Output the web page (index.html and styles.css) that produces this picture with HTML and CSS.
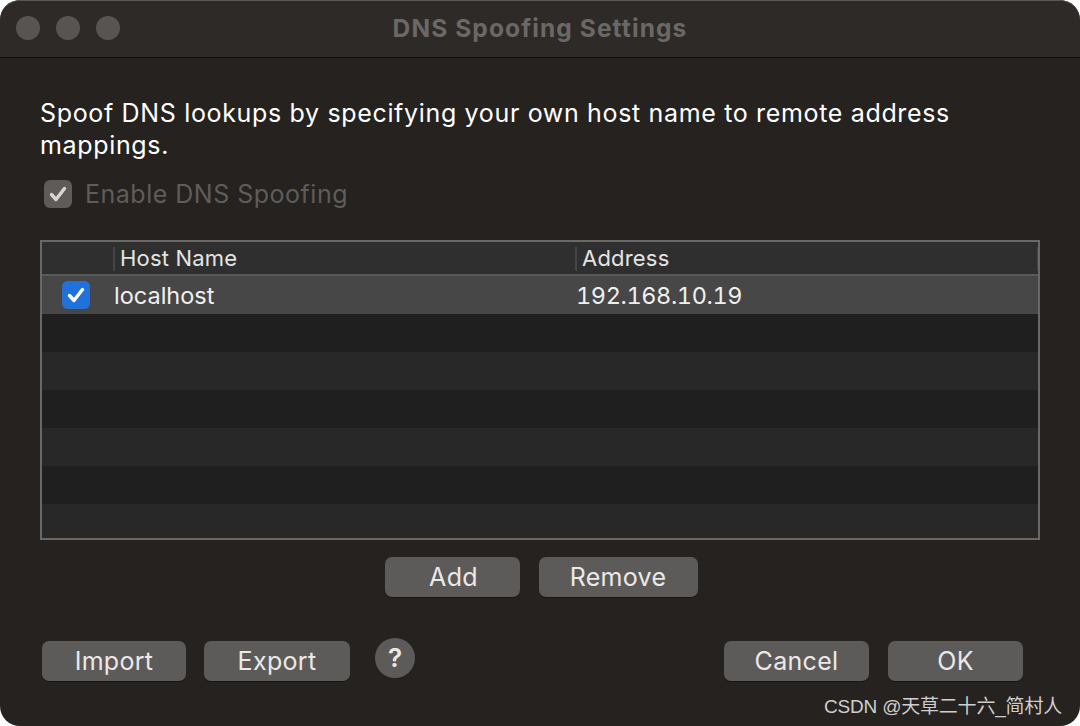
FILE: index.html
```html
<!DOCTYPE html>
<html>
<head>
<meta charset="utf-8">
<link rel="stylesheet" href="styles.css">
</head>
<body>
<div class="window">
  <div class="titlebar">
    <div class="lights">
      <span class="light"></span><span class="light"></span><span class="light"></span>
    </div>
    <div class="title">DNS Spoofing Settings</div>
    <div class="spacer"></div>
  </div>
  <div class="content">
    <p class="desc">Spoof DNS lookups by specifying your own host name to remote address mappings.</p>
    <label class="enable">
      <span class="cb cb-disabled">
        <svg viewBox="0 0 28 28" width="28" height="28"><path d="M7.5 14.5 L12 19.5 L20.5 8.5" fill="none" stroke="#d8d6d4" stroke-width="3.4" stroke-linecap="round" stroke-linejoin="round"/></svg>
      </span>
      <span class="enable-text">Enable DNS Spoofing</span>
    </label>
    <div class="table">
      <div class="thead">
        <div class="th th-check"></div>
        <div class="th th-host"><span class="sep"></span>Host Name</div>
        <div class="th th-addr"><span class="sep"></span>Address</div>
        <div class="th th-end"><span class="sep"></span></div>
      </div>
      <div class="row selected">
        <div class="td td-check">
          <span class="cb cb-on">
            <svg viewBox="0 0 28 28" width="28" height="28"><path d="M7.5 14.5 L12 19.5 L20.5 8.5" fill="none" stroke="#ffffff" stroke-width="3.4" stroke-linecap="round" stroke-linejoin="round"/></svg>
          </span>
        </div>
        <div class="td td-host">localhost</div>
        <div class="td td-addr">192.168.10.19</div>
      </div>
      <div class="row odd"></div>
      <div class="row even"></div>
      <div class="row odd"></div>
      <div class="row even"></div>
      <div class="row odd"></div>
      <div class="row even"></div>
    </div>
    <div class="midbuttons">
      <button class="btn btn-add">Add</button>
      <button class="btn btn-remove">Remove</button>
    </div>
  </div>
  <div class="footer">
    <div class="footer-left">
      <button class="btn btn-import">Import</button>
      <button class="btn btn-export">Export</button>
      <button class="help">?</button>
    </div>
    <div class="footer-right">
      <button class="btn btn-cancel">Cancel</button>
      <button class="btn btn-ok">OK</button>
    </div>
  </div>
  <div class="watermark">CSDN @天草二十六_简村人</div>
</div>
</body>
</html>
```
FILE: styles.css
```css
html, body {
  margin: 0;
  padding: 0;
  background: #ffffff;
}
body {
  width: 1080px;
  height: 726px;
  overflow: hidden;
  font-family: "Inter", "Noto Sans", "Noto Sans CJK SC", sans-serif;
}
.window {
  position: relative;
  width: 1080px;
  height: 726px;
  box-sizing: border-box;
  border-radius: 20px;
  overflow: hidden;
  background: #252220;
  display: flex;
  flex-direction: column;
}
.titlebar {
  flex: none;
  background: #2e2a28;
  border-top: 1px solid #5c5856;
  border-bottom: 1px solid #0e0d0c;
  box-sizing: border-box;
  height: 58px;
  display: grid;
  grid-template-columns: 1fr auto 1fr;
  align-items: center;
  border-radius: 20px 20px 0 0;
}
.lights {
  display: flex;
  gap: 16px;
  padding-left: 16px;
  padding-bottom: 2px;
}
.light {
  width: 24px;
  height: 24px;
  border-radius: 50%;
  background: #585452;
}
.title {
  font-weight: 700;
  font-size: 24.5px;
  color: #6b6866;
  letter-spacing: 1.1px;
  padding-bottom: 3px;
}
.content {
  padding: 0 40px;
  display: flex;
  flex-direction: column;
}
.desc {
  margin: 39px 0 0 0;
  font-size: 25px;
  line-height: 32px;
  color: #ffffff;
  letter-spacing: 0.66px;
}
.enable {
  display: flex;
  align-items: center;
  gap: 13px;
  margin-top: 17px;
  height: 32px;
  padding-left: 4px;
}
.cb {
  width: 28px;
  height: 28px;
  border-radius: 6px;
  display: flex;
  align-items: center;
  justify-content: center;
  box-sizing: border-box;
}
.cb svg { display: block; }
.cb-disabled {
  background: #5e5b59;
}
.enable-text {
  font-size: 25px;
  color: #5f5c5a;
  letter-spacing: 0.5px;
}
.table {
  margin-top: 30px;
  width: 1000px;
  height: 300px;
  box-sizing: border-box;
  border: 2px solid #6a6866;
  overflow: hidden;
  background: #282828;
}
.thead {
  height: 34px;
  box-sizing: border-box;
  background: #2f2f2f;
  border-bottom: 2px solid #5a5a5a;
  display: flex;
  align-items: center;
}
.th {
  position: relative;
  height: 32px;
  display: flex;
  align-items: center;
  font-size: 22px;
  color: #e4e4e4;
  box-sizing: border-box;
  letter-spacing: 0.2px;
}
.sep {
  position: absolute;
  left: 0;
  top: 5px;
  width: 2px;
  height: 24px;
  background: #454545;
}
.th-check { width: 71px; }
.th-host { width: 462px; padding-left: 7px; }
.th-addr { width: 462px; padding-left: 7px; }
.th-end { width: 1px; }
.row {
  height: 38px;
  display: flex;
  align-items: center;
}
.row.selected { background: #474747; }
.row.odd { background: #1f1f1f; }
.row.even { background: #282828; }
.td {
  font-size: 23.5px;
  color: #f0f0f0;
}
.td-check {
  width: 71px;
  display: flex;
  padding-left: 20px;
  box-sizing: border-box;
}
.cb-on {
  background: #1f72dc;
  box-shadow: inset 0 0 0 1px #2a6fc8;
}
.td-host { width: 462px; padding-left: 1px; }
.td-addr {
  padding-left: 0;
  font-feature-settings: "tnum";
  letter-spacing: -0.4px;
}
.midbuttons {
  display: flex;
  justify-content: center;
  gap: 19px;
  margin-top: 17px;
  padding-left: 2px;
}
.btn {
  height: 40px;
  border: none;
  border-radius: 7px;
  background: #5d5b59;
  color: #ebe9e7;
  font-family: "Inter", "Noto Sans", sans-serif;
  font-size: 25px;
  letter-spacing: 0.3px;
  padding: 0;
  box-shadow: 0 1px 0 rgba(0,0,0,0.35);
}
.btn-add { width: 135px; padding-left: 3px; }
.btn-remove { width: 159px; }
.footer {
  margin-top: 44px;
  display: flex;
  justify-content: space-between;
  align-items: center;
  padding: 0 57px 0 42px;
}
.footer-left, .footer-right {
  display: flex;
  align-items: center;
}
.btn-import { width: 144px; }
.btn-export { width: 146px; margin-left: 18px; }
.help {
  margin-left: 25px;
  width: 40px;
  height: 40px;
  border-radius: 50%;
  border: none;
  background: #5d5b59;
  color: #ebe9e7;
  font-family: "Inter", "Noto Sans", sans-serif;
  font-weight: 600;
  font-size: 26px;
  padding: 0 0 2px 0;
  margin-top: -6px;
}
.btn-cancel { width: 145px; }
.btn-ok { width: 135px; margin-left: 19px; }
.watermark {
  position: absolute;
  right: 18px;
  bottom: 8px;
  font-family: "Liberation Sans", "Noto Sans CJK SC", sans-serif;
  font-size: 19px;
  color: #cfcfcf;
  letter-spacing: -0.2px;
}
```
